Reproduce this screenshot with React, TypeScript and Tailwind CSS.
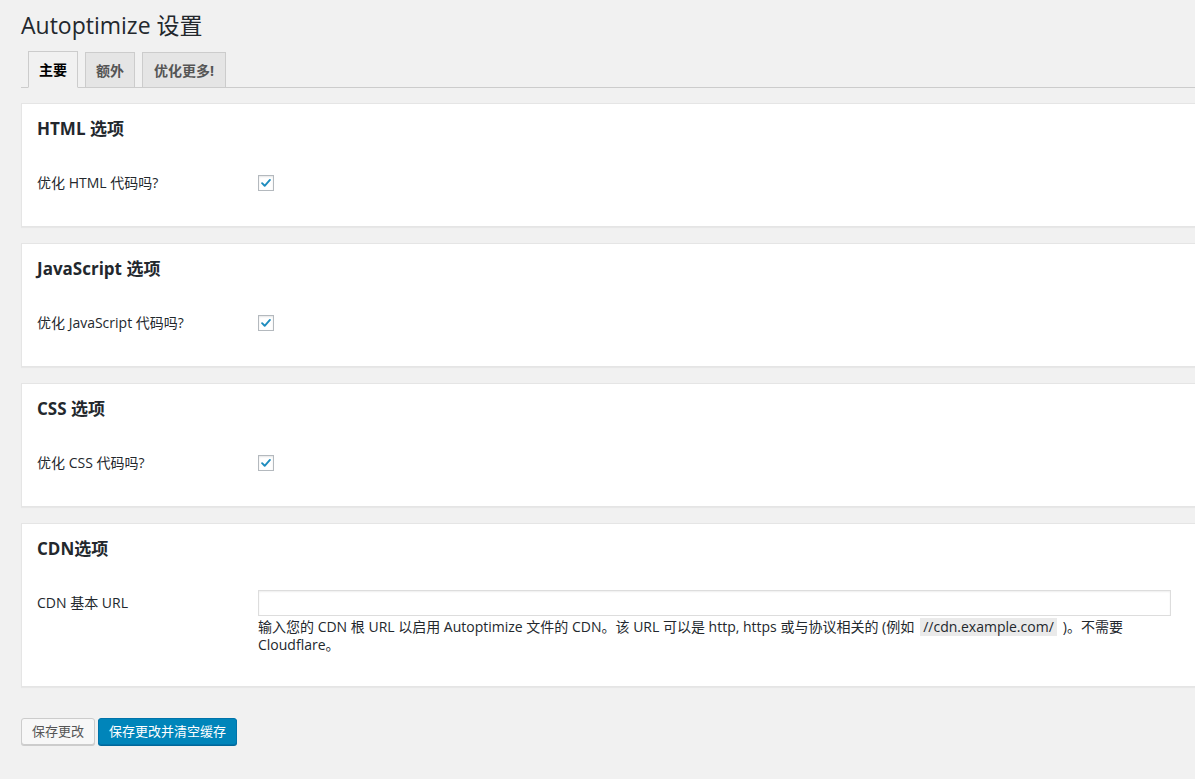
import React from 'react'

const font = { fontFamily: '"Open Sans", "Noto Sans CJK SC", sans-serif' }

function Check() {
 return (
  <span className="w-4 h-4 border border-[#b4b9be] bg-white shadow-[inset_0_1px_2px_rgba(0,0,0,0.1)] flex items-center justify-center">
   <svg viewBox="0 0 16 16" className="w-[14px] h-[14px]">
    <path d="M3.5 8.2 L6.5 11.2 L12.5 4.5" fill="none" stroke="#1e8cbe" strokeWidth="2.2" strokeLinecap="round" strokeLinejoin="round" />
   </svg>
  </span>
 )
}

function Panel({ title, children, h = 'h-[124px]' }: { title: string; children: React.ReactNode; h?: string }) {
 return (
  <div className={`${h} bg-white border border-[#e5e5e5] shadow-[0_1px_1px_rgba(0,0,0,0.04)] w-[1200px] pl-[15px] pt-[13px]`}>
   <h2 className="text-[17px] font-bold text-[#23282d] leading-6">{title}</h2>
   {children}
  </div>
 )
}

function CheckRow({ label }: { label: string }) {
 return (
  <div className="flex items-center mt-[31px]">
   <div className="w-[221px] text-[14px] text-[#23282d]">{label}</div>
   <Check />
  </div>
 )
}

export default function App() {
 return (
  <div className="w-[1195px] h-[779px] bg-[#f1f1f1] overflow-hidden" style={font}>
   <div className="pl-[21px] pt-[10px]">
    <h1 className="text-[23px] text-[#23282d] leading-[30px]">Autoptimize 设置</h1>
    <div className="flex items-end gap-[7px] mt-[12px] pl-[7px] border-b border-[#ccc] h-[36px] w-[1200px]">
     <div className="h-[37px] -mb-px px-[10px] border border-[#ccc] border-b-[#f1f1f1] bg-[#f1f1f1] text-[14px] font-bold text-[#000] flex items-center">主要</div>
     <div className="h-[36px] -mb-px px-[10px] border border-[#ccc] bg-[#e5e5e5] text-[14px] font-bold text-[#555] flex items-center">额外</div>
     <div className="h-[36px] -mb-px px-[11px] border border-[#ccc] bg-[#e5e5e5] text-[14px] font-bold text-[#555] flex items-center">优化更多!</div>
    </div>
    <div className="flex flex-col gap-4 mt-[15px]">
     <Panel title="HTML 选项"><CheckRow label="优化 HTML 代码吗?" /></Panel>
     <Panel title="JavaScript 选项"><CheckRow label="优化 JavaScript 代码吗?" /></Panel>
     <Panel title="CSS 选项"><CheckRow label="优化 CSS 代码吗?" /></Panel>
     <Panel title="CDN选项" h="h-[164px]">
      <div className="flex mt-[29px]">
       <div className="w-[221px] text-[14px] text-[#23282d] pt-[2px]">CDN 基本 URL</div>
       <div className="flex flex-col">
        <div className="w-[913px] h-[26px] border border-[#ddd] bg-white shadow-[inset_0_1px_2px_rgba(0,0,0,0.07)]" />
        <p className="text-[14px] leading-[18px] text-[#23282d] mt-[2px] w-[890px]">
         输入您的 CDN 根 URL 以启用 Autoptimize 文件的 CDN。该 URL 可以是 http, https 或与协议相关的 (例如<code className="inline-block bg-[#eaeaea] px-[3px] mx-[6px] text-[14px] leading-[18px]" style={font}>//cdn.example.com/</code>)。不需要 Cloudflare。
        </p>
       </div>
      </div>
     </Panel>
    </div>
    <div className="flex gap-[3px] mt-[31px]">
     <button className="h-[27px] px-[10px] border border-[#ccc] bg-[#f7f7f7] rounded-[3px] text-[13px] text-[#555] shadow-[0_1px_0_#ccc]">保存更改</button>
     <button className="h-[27px] px-[10px] border border-[#0073aa] bg-[#0085ba] rounded-[3px] text-[13px] text-white shadow-[0_1px_0_#006799]">保存更改并清空缓存</button>
    </div>
   </div>
  </div>
 )
}
